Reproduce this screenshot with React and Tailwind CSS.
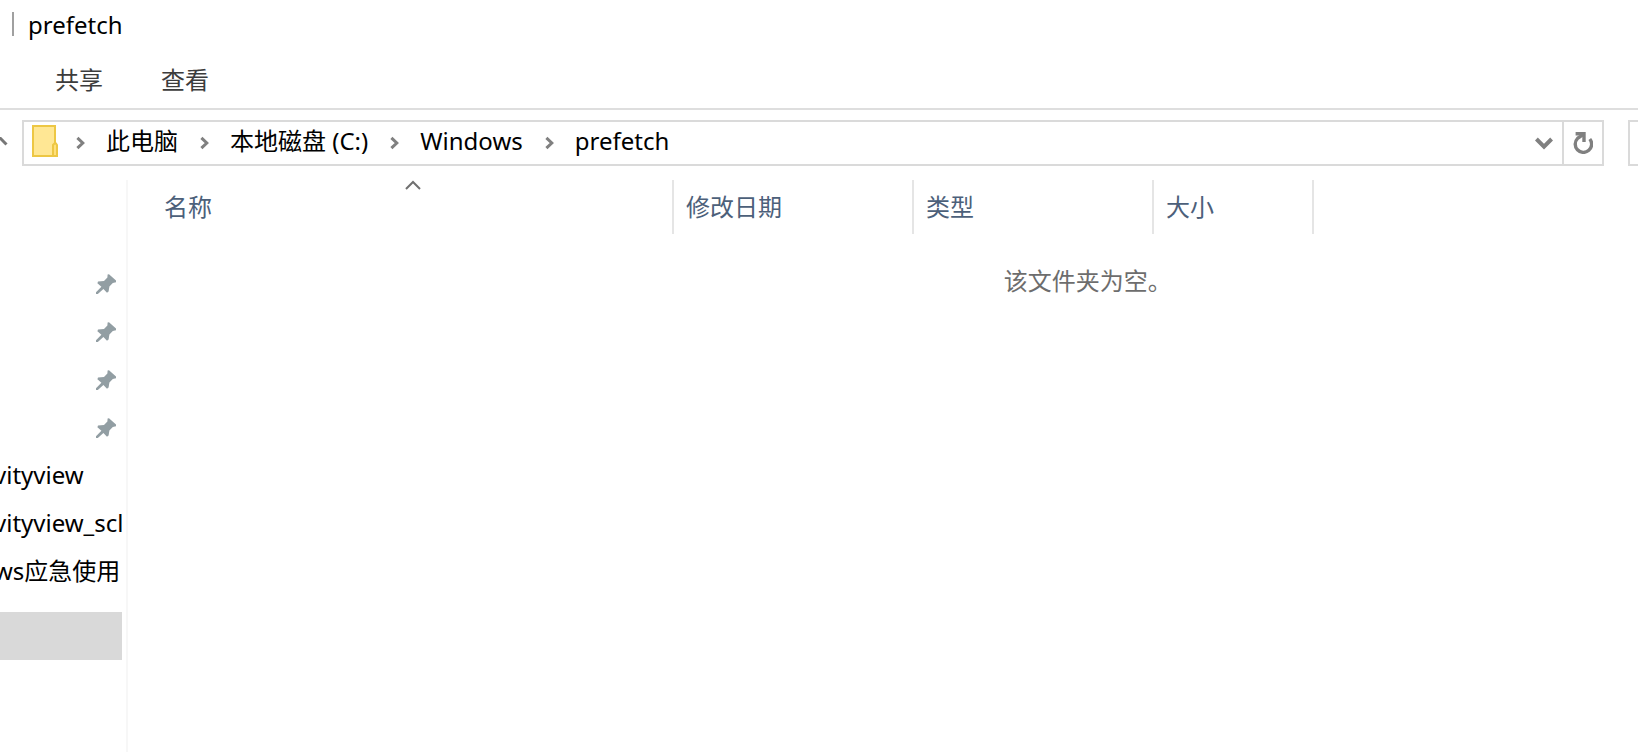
import React from "react";

const crumbs = ["此电脑", "本地磁盘 (C:)", "Windows", "prefetch"];

const pinned = [1, 2, 3, 4];

// the pane is scrolled sideways, so each name starts past the left edge
const folders = ["vityview", "vityview_scl", "ws应急使用"];

const Pin = () => (
  <svg viewBox="0 0 20 20" className="h-5 w-5 shrink-0 fill-[#929ea3]" aria-hidden="true">
    <path d="M13 0.2L20 6.4V8.2L16.8 9L13.4 12.6L12.6 17.6L11 18.8L7.4 15L1.8 20L0 20V18.2L5.4 12.8L1.4 9.2L2 7.6L8 7L11.4 3.6L11.6 0.6Z" />
  </svg>
);

const Chevron = () => (
  <svg viewBox="0 0 10 14" className="h-[14px] w-[10px] shrink-0" fill="none" stroke="#808080" strokeWidth="3" aria-hidden="true">
    <path d="M1.4 1.8L6.8 7L1.4 12.2" />
  </svg>
);

const FolderIcon = () => (
  <svg viewBox="0 0 26 32" className="h-8 w-[26px] shrink-0" aria-hidden="true">
    <path d="M1 1H23V31H1Z" fill="#ffe794" stroke="#edc744" strokeWidth="2" />
    <path d="M21 31V20L22.5 18.5H24L25 20V31Z" fill="#ffe07c" stroke="#edc744" strokeWidth="2" />
  </svg>
);

const TitleBar = () => (
  <div className="flex h-12 items-center pl-3">
    <span className="h-6 w-[2px] bg-[#a0a0a0]" />
    <h1 className="pl-[14px] pt-[2px]">prefetch</h1>
  </div>
);

const Ribbon = () => (
  <nav className="flex h-[62px] items-center gap-[58px] border-b-2 border-[#dedede] pl-[55px] pt-1 text-[#3c3c3c]">
    <button type="button">共享</button>
    <button type="button">查看</button>
  </nav>
);

const AddressBar = () => (
  <div className="mt-[10px] flex h-[46px]">
    <button type="button" aria-label="上移" className="flex w-[22px] shrink-0 items-center">
      <svg viewBox="0 0 10 12" className="h-3 w-[10px]" fill="none" stroke="#777" strokeWidth="3" aria-hidden="true">
        <path d="M-2 -1L6.5 7.5" />
      </svg>
    </button>
    <div className="flex min-w-0 flex-1 border-2 border-[#dadada]">
      <div className="flex min-w-0 flex-1 items-center pb-1 pl-2">
        <FolderIcon />
        {crumbs.map((name) => (
          <div key={name} className="flex items-center">
            <span className="pl-[18px] pr-5 pt-1">
              <Chevron />
            </span>
            <button type="button" className="whitespace-nowrap pr-1">{name}</button>
          </div>
        ))}
      </div>
      <button type="button" aria-label="以前的位置" className="flex w-9 items-center justify-center">
        <svg viewBox="0 0 18 14" className="h-[14px] w-[18px]" fill="none" stroke="#808080" strokeWidth="4" aria-hidden="true">
          <path d="M1.4 3L9 10.6L16.6 3" />
        </svg>
      </button>
      <button type="button" aria-label="刷新" className="flex w-10 items-center justify-center border-l-2 border-[#dadada]">
        <svg viewBox="0 0 20 22" className="h-[22px] w-5" fill="none" stroke="#808080" strokeWidth="3.4" aria-hidden="true">
          <path d="M16.8 7A8.2 8.2 0 1 1 4.6 6.4L10 2.6" />
          <path d="M2.6 1.7H11V10" />
        </svg>
      </button>
    </div>
    <input type="text" aria-label="搜索" className="ml-6 w-[10px] shrink-0 border-2 border-r-0 border-[#dadada] outline-none" />
  </div>
);

const Sidebar = () => (
  <aside className="w-32 shrink-0 border-r-2 border-[#f7f7f7] pt-20">
    <ul className="w-[122px] overflow-hidden">
      {pinned.map((id) => (
        <li key={id} className="flex h-12 items-center justify-end pr-[6px]">
          <Pin />
        </li>
      ))}
      {folders.map((name) => (
        <li key={name} className="-ml-[6px] flex h-12 items-center whitespace-nowrap pb-[2px]">{name}</li>
      ))}
      <li className="mt-4 h-12 bg-[#d9d9d9]" />
    </ul>
  </aside>
);

const FileList = () => (
  <main className="min-w-0 flex-1">
    <table className="w-full table-fixed border-separate border-spacing-0 text-left">
      <thead className="text-[#4c607a]">
        <tr className="h-[54px]">
          <th className="relative w-[546px] border-r-2 border-[#e5e5e5] pl-9 font-normal">
            名称
            <svg viewBox="0 0 16 10" className="absolute left-[277px] top-0 h-[10px] w-4" fill="none" stroke="#707070" strokeWidth="2" aria-hidden="true">
              <path d="M1 9L8 2L15 9" />
            </svg>
          </th>
          <th className="w-60 border-r-2 border-[#e5e5e5] pl-3 font-normal">修改日期</th>
          <th className="w-60 border-r-2 border-[#e5e5e5] pl-3 font-normal">类型</th>
          <th className="w-40 border-r-2 border-[#e5e5e5] pl-3 font-normal">大小</th>
          <th />
        </tr>
      </thead>
      <tbody>
        <tr className="h-24">
          <td colSpan={5} className="pb-[2px] pl-[58%] text-[#6d6d6d]">该文件夹为空。</td>
        </tr>
      </tbody>
    </table>
  </main>
);

const App = () => {
  return (
    <div className="flex min-h-screen flex-col overflow-hidden bg-white font-['Noto_Sans','Noto_Sans_CJK_SC',sans-serif] text-2xl text-black">
      <TitleBar />
      <Ribbon />
      <AddressBar />
      <div className="mt-[14px] flex flex-1">
        <Sidebar />
        <FileList />
      </div>
    </div>
  );
};

export default App;
